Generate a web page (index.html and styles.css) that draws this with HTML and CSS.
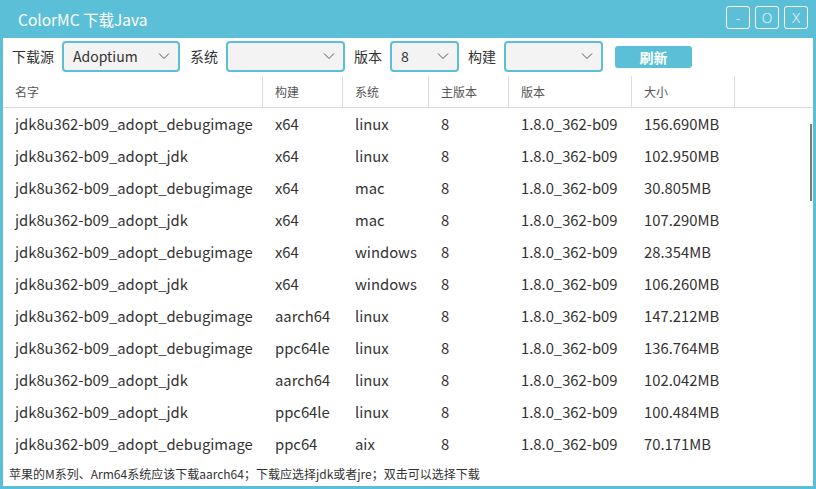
FILE: index.html
```html
<!DOCTYPE html>
<html>
<head>
<meta charset="utf-8">
<link rel="stylesheet" href="styles.css">
</head>
<body>
<div class="window">
  <div class="titlebar">
    <div class="title">ColorMC 下载Java</div>
    <div class="winbtns">
      <div class="winbtn">-</div>
      <div class="winbtn">O</div>
      <div class="winbtn">X</div>
    </div>
  </div>
  <div class="content">
    <div class="toolbar">
      <span class="label">下载源</span>
      <div class="combo c1"><span>Adoptium</span><svg class="chev" width="12" height="8" viewBox="0 0 12 8"><path d="M1 1.5 L6 6.5 L11 1.5" fill="none" stroke="#555" stroke-width="1"/></svg></div>
      <span class="label">系统</span>
      <div class="combo c2"><span></span><svg class="chev" width="12" height="8" viewBox="0 0 12 8"><path d="M1 1.5 L6 6.5 L11 1.5" fill="none" stroke="#555" stroke-width="1"/></svg></div>
      <span class="label">版本</span>
      <div class="combo c3"><span>8</span><svg class="chev" width="12" height="8" viewBox="0 0 12 8"><path d="M1 1.5 L6 6.5 L11 1.5" fill="none" stroke="#555" stroke-width="1"/></svg></div>
      <span class="label">构建</span>
      <div class="combo c4"><span></span><svg class="chev" width="12" height="8" viewBox="0 0 12 8"><path d="M1 1.5 L6 6.5 L11 1.5" fill="none" stroke="#555" stroke-width="1"/></svg></div>
      <div class="refresh">刷新</div>
    </div>
    <div class="grid">
      <div class="row head">
        <div class="cell">名字</div><div class="cell">构建</div><div class="cell">系统</div><div class="cell">主版本</div><div class="cell">版本</div><div class="cell">大小</div><div class="cell last"></div>
      </div>
      <div class="body">
        <div class="row"><div class="cell">jdk8u362-b09_adopt_debugimage</div><div class="cell">x64</div><div class="cell">linux</div><div class="cell">8</div><div class="cell">1.8.0_362-b09</div><div class="cell">156.690MB</div></div>
        <div class="row"><div class="cell">jdk8u362-b09_adopt_jdk</div><div class="cell">x64</div><div class="cell">linux</div><div class="cell">8</div><div class="cell">1.8.0_362-b09</div><div class="cell">102.950MB</div></div>
        <div class="row"><div class="cell">jdk8u362-b09_adopt_debugimage</div><div class="cell">x64</div><div class="cell">mac</div><div class="cell">8</div><div class="cell">1.8.0_362-b09</div><div class="cell">30.805MB</div></div>
        <div class="row"><div class="cell">jdk8u362-b09_adopt_jdk</div><div class="cell">x64</div><div class="cell">mac</div><div class="cell">8</div><div class="cell">1.8.0_362-b09</div><div class="cell">107.290MB</div></div>
        <div class="row"><div class="cell">jdk8u362-b09_adopt_debugimage</div><div class="cell">x64</div><div class="cell">windows</div><div class="cell">8</div><div class="cell">1.8.0_362-b09</div><div class="cell">28.354MB</div></div>
        <div class="row"><div class="cell">jdk8u362-b09_adopt_jdk</div><div class="cell">x64</div><div class="cell">windows</div><div class="cell">8</div><div class="cell">1.8.0_362-b09</div><div class="cell">106.260MB</div></div>
        <div class="row"><div class="cell">jdk8u362-b09_adopt_debugimage</div><div class="cell">aarch64</div><div class="cell">linux</div><div class="cell">8</div><div class="cell">1.8.0_362-b09</div><div class="cell">147.212MB</div></div>
        <div class="row"><div class="cell">jdk8u362-b09_adopt_debugimage</div><div class="cell">ppc64le</div><div class="cell">linux</div><div class="cell">8</div><div class="cell">1.8.0_362-b09</div><div class="cell">136.764MB</div></div>
        <div class="row"><div class="cell">jdk8u362-b09_adopt_jdk</div><div class="cell">aarch64</div><div class="cell">linux</div><div class="cell">8</div><div class="cell">1.8.0_362-b09</div><div class="cell">102.042MB</div></div>
        <div class="row"><div class="cell">jdk8u362-b09_adopt_jdk</div><div class="cell">ppc64le</div><div class="cell">linux</div><div class="cell">8</div><div class="cell">1.8.0_362-b09</div><div class="cell">100.484MB</div></div>
        <div class="row"><div class="cell">jdk8u362-b09_adopt_debugimage</div><div class="cell">ppc64</div><div class="cell">aix</div><div class="cell">8</div><div class="cell">1.8.0_362-b09</div><div class="cell">70.171MB</div></div>
        <div class="scrollthumb"></div>
      </div>
    </div>
    <div class="footer">苹果的M系列、Arm64系统应该下载aarch64；下载应选择jdk或者jre；双击可以选择下载</div>
  </div>
</div>
</body>
</html>
```
FILE: styles.css
```css
html, body {
  margin: 0;
  padding: 0;
}
body {
  width: 816px;
  height: 489px;
  overflow: hidden;
  font-family: "Noto Sans CJK SC", "Noto Sans", sans-serif;
  color: #333;
}
.window {
  width: 816px;
  height: 489px;
  box-sizing: border-box;
  background: #5bbfd7;
  padding: 0 3px 3px 3px;
  display: flex;
  flex-direction: column;
}
.titlebar {
  height: 38px;
  flex: none;
  display: flex;
  align-items: center;
  justify-content: space-between;
}
.title {
  color: #fff;
  font-size: 15.5px;
  padding-left: 15px;
  line-height: 20px;
}
.winbtns {
  display: flex;
  gap: 5px;
  padding-right: 5px;
  padding-bottom: 3px;
}
.winbtn {
  width: 22px;
  height: 21px;
  border: 1px solid #fff;
  border-radius: 3px;
  color: #fff;
  font-size: 14px;
  font-family: "DejaVu Sans", sans-serif;
  font-weight: 300;
  display: flex;
  align-items: center;
  justify-content: center;
}
.content {
  flex: 1;
  background: #fff;
  display: flex;
  flex-direction: column;
  min-height: 0;
}
.toolbar {
  height: 38px;
  flex: none;
  display: flex;
  align-items: center;
  padding-left: 9px;
  padding-bottom: 2px;
  box-sizing: border-box;
}
.label {
  font-size: 14px;
  color: #333;
  margin-right: 8px;
}
.combo {
  height: 31px;
  box-sizing: border-box;
  border: 2px solid #5bbfd7;
  border-radius: 4px;
  background: #f3f3f3;
  display: flex;
  align-items: center;
  justify-content: space-between;
  padding: 0 8px 0 9px;
  font-size: 14px;
  color: #333;
}
.c1 { width: 118px; margin-right: 10px; }
.c2 { width: 119px; margin-right: 9px; }
.c3 { width: 69px; margin-right: 9px; }
.c4 { width: 99px; margin-right: 12px; }
.chev { flex: none; }
.refresh {
  width: 77px;
  height: 22px;
  border-radius: 3px;
  background: #5bbfd7;
  color: #fff;
  font-weight: bold;
  font-size: 14px;
  display: flex;
  align-items: center;
  justify-content: center;
  margin-top: 2px;
}
.grid {
  flex: 1;
  min-height: 0;
  display: flex;
  flex-direction: column;
}
.row {
  display: grid;
  grid-template-columns: 260px 80px 86px 80px 123px 103px 1fr;
  height: 32px;
  align-items: center;
}
.row .cell {
  padding-left: 12px;
  padding-bottom: 4px;
  white-space: nowrap;
  font-size: 14.8px;
  color: #333;
  height: 100%;
  display: flex;
  align-items: center;
  box-sizing: border-box;
}
.head {
  height: 31px;
  border-bottom: 1px solid #dcdcdc;
  flex: none;
}
.head .cell {
  font-size: 12px;
  color: #555;
  padding-bottom: 0;
  border-right: 1px solid #dcdcdc;
}
.head .cell.last { border-right: none; }
.body {
  flex: 1;
  min-height: 0;
  overflow: hidden;
  position: relative;
  padding-top: 1px;
}
.scrollthumb {
  position: absolute;
  right: 1px;
  top: 16px;
  width: 2px;
  height: 77px;
  background: #7a7a7a;
}
.footer {
  height: 23px;
  flex: none;
  font-size: 12px;
  color: #333;
  padding-left: 6px;
  padding-bottom: 3px;
  box-sizing: border-box;
  display: flex;
  align-items: center;
}
```
